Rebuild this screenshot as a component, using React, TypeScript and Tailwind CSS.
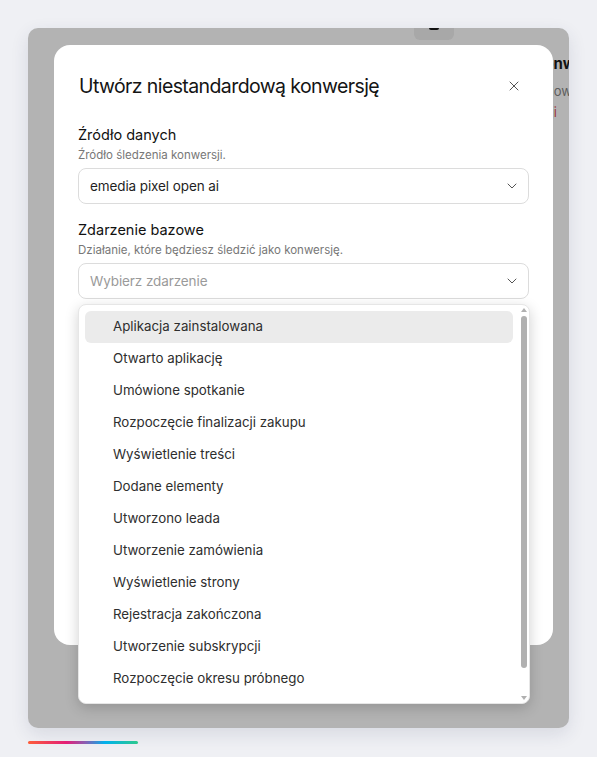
import { ChevronDown, X } from "lucide-react";

const events = [
  "Aplikacja zainstalowana",
  "Otwarto aplikację",
  "Umówione spotkanie",
  "Rozpoczęcie finalizacji zakupu",
  "Wyświetlenie treści",
  "Dodane elementy",
  "Utworzono leada",
  "Utworzenie zamówienia",
  "Wyświetlenie strony",
  "Rejestracja zakończona",
  "Utworzenie subskrypcji",
  "Rozpoczęcie okresu próbnego",
];

const Field = ({
  label,
  hint,
  value,
  placeholder,
  className,
}: {
  label: string;
  hint: string;
  value?: string;
  placeholder?: string;
  className?: string;
}) => (
  <div className={className}>
    <div className="text-[14.5px] leading-[20px] font-normal text-[#111]">{label}</div>
    <div className="mt-[2px] text-[11.5px] leading-[16px] text-[#777]">{hint}</div>
    <div className="mt-[5px] flex h-[36px] items-center justify-between rounded-[8px] border border-[#dcdcdc] bg-white pl-[11px] pr-[8px]">
      <span
        className={
          value
            ? "text-[13.5px] tracking-[-0.1px] text-[#1f1f1f]"
            : "text-[13.5px] tracking-[-0.1px] text-[#9a9a9a]"
        }
      >
        {value ?? placeholder}
      </span>
      <ChevronDown size={16} strokeWidth={1.5} className="text-[#555]" />
    </div>
  </div>
);

const App = () => {
  return (
    <div className="min-h-screen bg-[#eff0f4] px-[28px] pt-[28px] font-['Inter',sans-serif]">
      <div className="relative h-[700px] w-[541px] overflow-hidden rounded-[10px] bg-[#b3b3b3] shadow-[0_6px_18px_rgba(40,50,90,0.12)]">
        {/* tab peeking behind the overlay */}
        <div className="absolute left-[386px] top-0 flex h-[12px] w-[40px] justify-center rounded-b-[6px] bg-[#a8a8a8]">
          <div className="h-[2px] w-[10px] rounded-b-full bg-[#111]" />
        </div>
        {/* page text peeking on the right, mostly hidden by the modal */}
        <div className="absolute left-[506px] top-[26px] flex flex-col whitespace-nowrap">
          <span className="text-[15px] font-bold leading-[20px] text-[#111]">Konwersje</span>
          <span className="mt-[8px] pl-[10px] text-[13px] leading-[18px] text-[#5e5e5e]">Nowe zdarzenia</span>
          <div className="mt-[3px] flex w-[23px] justify-end">
            <span className="shrink-0 text-[13px] leading-[18px] text-[#9b3a3a]">Usuń dane konwersji</span>
          </div>
        </div>

        {/* modal */}
        <div className="absolute left-[26px] top-[17px] h-[600px] w-[499px] rounded-[16px] bg-white px-[24px] pt-[27px]">
          <div className="flex items-center justify-between">
            <h2 className="pl-[1px] text-[19.5px] leading-[28px] font-normal tracking-[-0.6px] text-[#141414]">
              Utwórz niestandardową konwersję
            </h2>
            <X size={16} strokeWidth={1.5} className="mr-[7px] text-[#555]" />
          </div>

          <Field
            className="mt-[25px]"
            label="Źródło danych"
            hint="Źródło śledzenia konwersji."
            value="emedia pixel open ai"
          />
          <Field
            className="mt-[16px]"
            label="Zdarzenie bazowe"
            hint="Działanie, które będziesz śledzić jako konwersję."
            placeholder="Wybierz zdarzenie"
          />

          {/* open listbox */}
          <div className="absolute left-[24px] top-[259px] h-[400px] w-[452px] rounded-[8px] border border-[#e6e6e6] bg-white pl-[6px] pr-[16px] pt-[6px] shadow-[0_4px_14px_rgba(0,0,0,0.18)]">
            {events.map((e, i) => (
              <div
                key={e}
                className={
                  i === 0
                    ? "flex h-[32px] items-center rounded-[6px] bg-[#ebebeb] pl-[28px] text-[13.3px] text-[#2e2e2e]"
                    : "flex h-[32px] items-center rounded-[6px] pl-[28px] text-[13.3px] text-[#2e2e2e]"
                }
              >
                {e}
              </div>
            ))}
            {/* scrollbar */}
            <div className="absolute right-[2px] top-[3px] h-0 w-0 border-x-[3px] border-b-[4px] border-x-transparent border-b-[#b0b0b0]" />
            <div className="absolute right-[2px] top-[11px] h-[352px] w-[6px] rounded-full bg-[#b0b0b0]" />
            <div className="absolute bottom-[3px] right-[2px] h-0 w-0 border-x-[3px] border-t-[4px] border-x-transparent border-t-[#b0b0b0]" />
          </div>
        </div>
      </div>
      <div className="mt-[13px] h-[3px] w-[110px] rounded-full bg-[linear-gradient(90deg,#ff5f3a,#e91e78_35%,#8e5fb5_52%,#00b4f0_70%,#2ecc8f)]" />
    </div>
  );
};

export default App;
